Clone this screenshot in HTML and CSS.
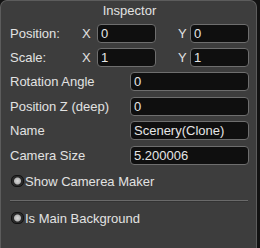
FILE: index.html
```html
<!DOCTYPE html>
<html lang="en">
<head>
    <meta charset="UTF-8">
    <title>Inspector</title>
    <link rel="stylesheet" href="styles.css">
</head>
<body>

<!-- Inspector panel -->
<div class="inspector">
    <div class="title">Inspector</div>

    <div class="row">
        <span class="label short">Position:</span>
        <span class="axis">X</span>
        <input class="field small" type="text" value="0">
        <span class="axis y">Y</span>
        <input class="field small" type="text" value="0">
    </div>

    <div class="row">
        <span class="label short">Scale:</span>
        <span class="axis">X</span>
        <input class="field small" type="text" value="1">
        <span class="axis y">Y</span>
        <input class="field small" type="text" value="1">
    </div>

    <div class="row">
        <span class="label">Rotation Angle</span>
        <input class="field wide" type="text" value="0">
    </div>

    <div class="row">
        <span class="label">Position Z (deep)</span>
        <input class="field wide" type="text" value="0">
    </div>

    <div class="row">
        <span class="label">Name</span>
        <input class="field wide" type="text" value="Scenery(Clone)">
    </div>

    <div class="row">
        <span class="label">Camera Size</span>
        <input class="field wide" type="text" value="5.200006">
    </div>

    <div class="toggle first">
        <span class="radio"></span>
        <span>Show Camerea Maker</span>
    </div>

    <div class="separator"></div>

    <div class="toggle">
        <span class="radio"></span>
        <span>Is Main Background</span>
    </div>
</div>

</body>
</html>
```

FILE: styles.css
```css
body {
    margin: 0;
    background-color: #121212;
    font-family: "Liberation Sans", Arial, sans-serif;
    font-size: 13px;
    color: #e2e2e2;
}

.inspector {
    box-sizing: border-box;
    width: 257px;
    height: 248px;
    background-color: #3d3d3d;
    border: 1px solid #5c5c5c;
    border-bottom: none;
    border-radius: 7px 7px 0 0;
    padding: 0 7px 0 9px;
}

.title {
    height: 20px;
    line-height: 20px;
    text-align: center;
}

.row {
    display: flex;
    align-items: center;
    height: 24.4px;
}

.label {
    flex: 1;
}

.label.short {
    flex: none;
    width: 72px;
}

.axis {
    width: 15px;
}

.axis.y {
    margin-left: 22px;
    width: 12px;
}

.field {
    box-sizing: border-box;
    height: 19px;
    background-color: #0f0f0f;
    border: 1px solid #6e6e6e;
    border-radius: 4px;
    padding: 0 3px;
    color: #e6e6e6;
    font-family: "Liberation Sans", Arial, sans-serif;
    font-size: 13px;
}

.field.small {
    width: 59px;
}

.field.wide {
    width: 119px;
}

.toggle {
    display: flex;
    align-items: center;
    gap: 1px;
    height: 16px;
    padding-left: 1px;
}

.toggle.first {
    margin-top: 6px;
}

.radio {
    box-sizing: border-box;
    width: 13px;
    height: 12px;
    border-radius: 5px;
    background: radial-gradient(circle, #d8d8d8 0, #b5b5b5 3px, #2a2a2a 4px);
    border: 1px solid #111;
}

.separator {
    height: 1px;
    background-color: #6a6a6a;
    border-bottom: 1px solid #333;
    margin: 11px 1px 8px 0;
}
```
